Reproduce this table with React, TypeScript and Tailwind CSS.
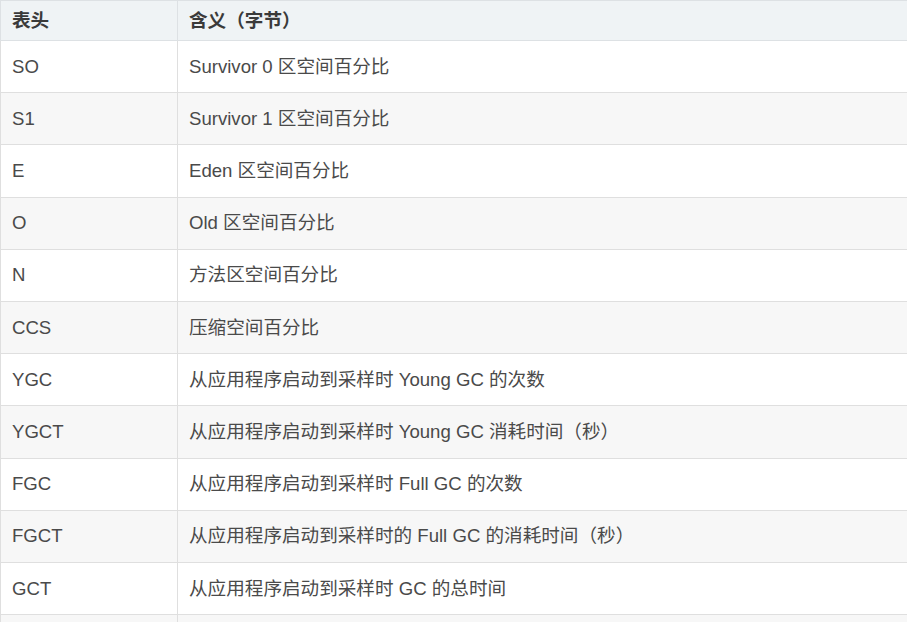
const rows: [string, string][] = [
  ["SO", "Survivor 0 区空间百分比"],
  ["S1", "Survivor 1 区空间百分比"],
  ["E", "Eden 区空间百分比"],
  ["O", "Old 区空间百分比"],
  ["N", "方法区空间百分比"],
  ["CCS", "压缩空间百分比"],
  ["YGC", "从应用程序启动到采样时 Young GC 的次数"],
  ["YGCT", "从应用程序启动到采样时 Young GC 消耗时间（秒）"],
  ["FGC", "从应用程序启动到采样时 Full GC 的次数"],
  ["FGCT", "从应用程序启动到采样时的 Full GC 的消耗时间（秒）"],
  ["GCT", "从应用程序启动到采样时 GC 的总时间"],
  ["", ""],
];

export default function App() {
  return (
    <div className="w-[907px] h-[622px] overflow-hidden bg-white">
      <table
        className="w-[909px] border-collapse text-[18.6px] text-[#4a4a4a]"
        style={{ fontFamily: '"Liberation Sans", Arial, "Noto Sans CJK SC", sans-serif' }}
      >
        <thead>
          <tr className="bg-[#eff3f5]">
            <th className="h-[40px] w-[177px] border border-[#dde1e4] pl-[11px] text-left font-bold text-[#3a3a3a]">表头</th>
            <th className="h-[40px] border border-[#dde1e4] pl-[11px] text-left font-bold text-[#3a3a3a]">含义（字节）</th>
          </tr>
        </thead>
        <tbody>
          {rows.map(([k, v], i) => (
            <tr key={i} className={i % 2 === 1 ? "bg-[#f7f7f7]" : "bg-white"}>
              <td className="h-[52.2px] border border-[#dfdfdf] pl-[11px]">{k}</td>
              <td className="h-[52.2px] border border-[#dfdfdf] pl-[11px]">{v}</td>
            </tr>
          ))}
        </tbody>
      </table>
    </div>
  );
}
